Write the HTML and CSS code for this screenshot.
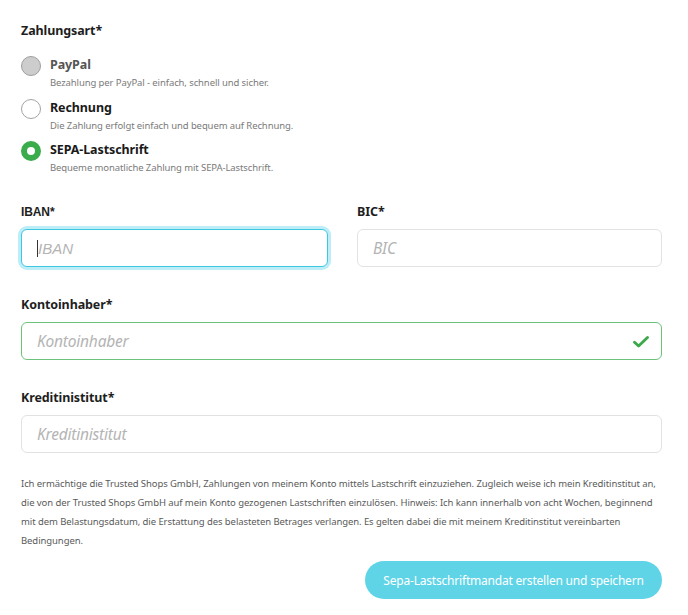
FILE: index.html
```html
<!DOCTYPE html>
<html lang="de">
<head>
<meta charset="utf-8">
<link rel="stylesheet" href="styles.css">
</head>
<body>
<form class="page">
  <h2 class="section-title">Zahlungsart*</h2>
  <div class="options">
    <label class="option">
      <span class="radio radio-disabled"></span>
      <span class="option-text">
        <span class="option-name muted">PayPal</span>
        <span class="option-desc">Bezahlung per PayPal - einfach, schnell und sicher.</span>
      </span>
    </label>
    <label class="option">
      <span class="radio"></span>
      <span class="option-text">
        <span class="option-name">Rechnung</span>
        <span class="option-desc">Die Zahlung erfolgt einfach und bequem auf Rechnung.</span>
      </span>
    </label>
    <label class="option">
      <span class="radio radio-checked"></span>
      <span class="option-text">
        <span class="option-name">SEPA-Lastschrift</span>
        <span class="option-desc">Bequeme monatliche Zahlung mit SEPA-Lastschrift.</span>
      </span>
    </label>
  </div>

  <div class="row two-col">
    <div class="field">
      <label class="field-label arial">IBAN*</label>
      <div class="input input-focus"><span class="caret"></span><span class="placeholder arial-ph">IBAN</span></div>
    </div>
    <div class="field">
      <label class="field-label">BIC*</label>
      <div class="input"><span class="placeholder">BIC</span></div>
    </div>
  </div>

  <div class="row">
    <div class="field">
      <label class="field-label">Kontoinhaber*</label>
      <div class="input input-valid"><span class="placeholder">Kontoinhaber</span>
        <svg class="check" width="16" height="12" viewBox="0 0 16 12"><path d="M1.5 6.2 L5.6 10 L14.5 1.5" fill="none" stroke="#3aa94a" stroke-width="2.8" stroke-linecap="round" stroke-linejoin="round"/></svg>
      </div>
    </div>
  </div>

  <div class="row">
    <div class="field">
      <label class="field-label">Kreditinistitut*</label>
      <div class="input"><span class="placeholder">Kreditinistitut</span></div>
    </div>
  </div>

  <p class="mandate">Ich ermächtige die Trusted Shops GmbH, Zahlungen von meinem Konto mittels Lastschrift einzuziehen. Zugleich weise ich mein Kreditinstitut an, die von der Trusted Shops GmbH auf mein Konto gezogenen Lastschriften einzulösen. Hinweis: Ich kann innerhalb von acht Wochen, beginnend mit dem Belastungsdatum, die Erstattung des belasteten Betrages verlangen. Es gelten dabei die mit meinem Kreditinstitut vereinbarten Bedingungen.</p>

  <div class="actions">
    <button type="button" class="submit">Sepa-Lastschriftmandat erstellen und speichern</button>
  </div>
</form>
</body>
</html>
```

FILE: styles.css
```css
* { box-sizing: border-box; }
html, body { margin: 0; padding: 0; background: #fff; }
body {
  font-family: "Noto Sans", "Open Sans", sans-serif;
  color: #1e1e1e;
}
.page {
  width: 688px;
  padding: 22px 26px 0 21px;
}
.section-title {
  margin: 0;
  font-size: 12.5px;
  font-weight: 700;
  line-height: 18px;
  letter-spacing: -0.1px;
}
.options {
  margin-top: 16px;
  display: flex;
  flex-direction: column;
  gap: 7.5px;
}
.option {
  display: flex;
  align-items: flex-start;
  gap: 9px;
}
.radio {
  flex: none;
  width: 20px;
  height: 20px;
  border-radius: 50%;
  border: 1.5px solid #a3a3a3;
  background: #fff;
}
.radio-disabled {
  background: #cdcdcd;
  border-color: #9e9e9e;
}
.radio-checked {
  border: 6px solid #3aac4c;
  background: #fff;
}
.option-text {
  display: flex;
  flex-direction: column;
}
.option-name {
  font-size: 12.5px;
  font-weight: 700;
  line-height: 18px;
  letter-spacing: -0.1px;
  color: #1a1a1a;
}
.option-name.muted { color: #555; }
.option-desc {
  font-size: 9.5px;
  line-height: 17px;
  color: #7a7a7a;
  letter-spacing: -0.1px;
}
.row {
  margin-top: 29px;
}
.two-col {
  margin-top: 27px;
  display: grid;
  grid-template-columns: 307px 305px;
  column-gap: 29px;
}
.field {
  display: flex;
  flex-direction: column;
}
.field-label {
  font-size: 12.5px;
  font-weight: 700;
  line-height: 18px;
  letter-spacing: -0.1px;
  margin-bottom: 8px;
}
.field-label.arial {
  font-family: "Liberation Sans", Arial, sans-serif;
  font-size: 12px;
}
.input {
  position: relative;
  height: 38px;
  border: 1px solid #e2e2e2;
  border-radius: 6px;
  display: flex;
  align-items: center;
  padding-left: 15px;
  background: #fff;
}
.input-focus {
  border: 1.5px solid #3ec7e3;
  box-shadow: 0 0 0 3px #bdeef7;
}
.input-valid {
  border: 1.5px solid #6cc27a;
}
.placeholder {
  font-style: italic;
  font-size: 15.5px;
  color: #b4b4b4;
  letter-spacing: -0.2px;
}
.arial-ph {
  font-family: "Liberation Sans", Arial, sans-serif;
  font-size: 15px;
  letter-spacing: 0;
}
.caret {
  width: 1px;
  height: 17px;
  background: #333;
}
.check {
  position: absolute;
  right: 12px;
  top: 13px;
}
.mandate {
  margin: 21px 0 0;
  font-size: 9.5px;
  line-height: 19px;
  color: #5a5a5a;
  letter-spacing: -0.08px;
}
.actions {
  display: flex;
  justify-content: flex-end;
  margin-top: 11px;
}
.submit {
  font-family: "Noto Sans", "Open Sans", sans-serif;
  width: 297px;
  height: 38px;
  border: none;
  border-radius: 19px;
  background: #5fd4e7;
  color: #fff;
  font-size: 12px;
  letter-spacing: -0.2px;
  padding: 0;
}
```
